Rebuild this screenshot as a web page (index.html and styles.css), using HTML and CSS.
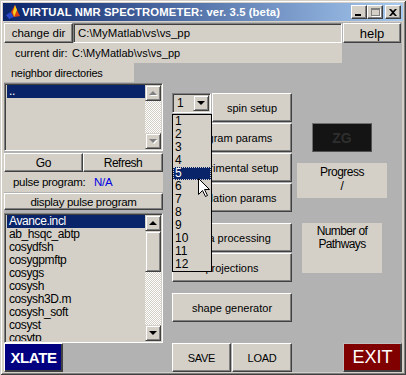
FILE: index.html
```html
<!DOCTYPE html>
<html>
<head>
<meta charset="utf-8">
<link rel="stylesheet" href="styles.css">
</head>
<body>
<div class="window">
  <div class="titlebar">
    <svg class="app-icon" width="16" height="16" viewBox="0 0 16 16">
      <polygon points="1,11 6,8 9,13 4,15" fill="#2a48c8"/>
      <polygon points="6,8 10,1 12,6 15,12 9,13" fill="#e04010"/>
      <polygon points="10,1 12,6 9,13 8,8" fill="#f8d020"/>
    </svg>
    <span class="title">VIRTUAL NMR SPECTROMETER: ver. 3.5 (beta)</span>
    <div class="caption-btns">
      <span class="cbtn cbtn-min"><i class="min-bar"></i></span>
      <span class="cbtn cbtn-max"><i class="max-box"></i></span>
      <span class="cbtn cbtn-close">
        <svg width="8" height="7" viewBox="0 0 8 7"><path d="M0,0 L2,0 L4,2 L6,0 L8,0 L5,3.5 L8,7 L6,7 L4,5 L2,7 L0,7 L3,3.5 Z" fill="#000"/></svg>
      </span>
    </div>
  </div>
  <div class="client">
    <div class="row1">
      <div class="btn btn-change">change dir</div>
      <div class="edit">C:\MyMatlab\vs\vs_pp</div>
      <div class="btn btn-help">help</div>
    </div>
    <div class="curdir"><span class="curdir-lbl">current dir:</span><span>C:\MyMatlab\vs\vs_pp</span></div>
    <div class="body">
      <div class="col-left">
        <div class="neighbor">neighbor directories</div>
        <div class="listbox lb1">
          <div class="items"><div class="item sel">..</div></div>
          <div class="scrollbar">
            <div class="sb-btn"><i class="tri-up dis"></i></div>
            <div class="sb-track"></div>
            <div class="sb-btn"><i class="tri-down dis"></i></div>
          </div>
        </div>
        <div class="btnrow">
          <div class="btn btn-go">Go</div>
          <div class="btn btn-refresh">Refresh</div>
        </div>
        <div class="pulse"><span class="pulse-lbl">pulse program:</span><span class="pulse-val">N/A</span></div>
        <div class="btn btn-display">display pulse program</div>
        <div class="listbox lb2">
          <div class="items">
            <div class="item sel">Avance.incl</div>
            <div class="item">ab_hsqc_abtp</div>
            <div class="item">cosydfsh</div>
            <div class="item">cosygpmftp</div>
            <div class="item">cosygs</div>
            <div class="item">cosysh</div>
            <div class="item">cosysh3D.m</div>
            <div class="item">cosysh_soft</div>
            <div class="item">cosyst</div>
            <div class="item">cosytp</div>
          </div>
          <div class="scrollbar">
            <div class="sb-btn"><i class="tri-up"></i></div>
            <div class="sb-thumb"></div>
            <div class="sb-track"></div>
            <div class="sb-btn"><i class="tri-down"></i></div>
          </div>
        </div>
        <div class="btn btn-xlate">XLATE</div>
      </div>

      <div class="col-mid">
        <div class="spinrow">
          <div class="popup"><span class="popup-val">1</span><span class="popup-btn"><i class="tri-down"></i></span></div>
          <div class="btn btn-spin">spin setup</div>
        </div>
        <div class="btn btn-mid">program params</div>
        <div class="btn btn-mid">experimental setup</div>
        <div class="btn btn-mid">simulation params</div>
        <div class="btn btn-mid btn-gap">data processing</div>
        <div class="btn btn-mid">projections</div>
        <div class="btn btn-mid btn-gap">shape generator</div>
        <div class="saverow">
          <div class="btn btn-save">SAVE</div>
          <div class="btn btn-load">LOAD</div>
        </div>
        <div class="droplist">
          <div class="dl-item">1</div>
          <div class="dl-item">2</div>
          <div class="dl-item">3</div>
          <div class="dl-item">4</div>
          <div class="dl-item dl-sel">5</div>
          <div class="dl-item">6</div>
          <div class="dl-item">7</div>
          <div class="dl-item">8</div>
          <div class="dl-item">9</div>
          <div class="dl-item">10</div>
          <div class="dl-item">11</div>
          <div class="dl-item">12</div>
        </div>
        <svg class="cursor" width="13" height="20" viewBox="0 0 13 20">
          <polygon points="0.5,0.5 0.5,16.5 4.5,12.5 7.5,18.5 9.5,17.5 6.5,11.5 11.5,11.5" fill="#fff" stroke="#000" stroke-width="1"/>
        </svg>
      </div>

      <div class="col-right">
        <div class="zg">ZG</div>
        <div class="progress">Progress<br>/</div>
        <div class="pathways">Number of<br>Pathways</div>
        <div class="btn btn-exit">EXIT</div>
      </div>
    </div>
  </div>
</div>
</body>
</html>
```

FILE: styles.css
```css
html, body {
  margin: 0;
  padding: 0;
}
body {
  width: 406px;
  height: 375px;
  overflow: hidden;
  background: #d4d0c8;
  font-family: "Liberation Sans", Arial, sans-serif;
  color: #000;
}
.window {
  box-sizing: border-box;
  width: 406px;
  height: 375px;
  padding: 3px;
  background: #d4d0c8;
  box-shadow: inset 1px 1px 0 #d4d0c8, inset -1px -1px 0 #404040, inset 2px 2px 0 #fff, inset -2px -2px 0 #808080;
  display: flex;
  flex-direction: column;
}
.titlebar {
  height: 18px;
  flex: none;
  background: linear-gradient(to right, #0a246a, #a6caf0);
  display: flex;
  align-items: center;
  padding: 0 2px;
}
.app-icon { flex: none; }
.title {
  margin-left: 1px;
  color: #fff;
  font-weight: bold;
  font-size: 11.3px;
  letter-spacing: 0.1px;
  white-space: nowrap;
}
.caption-btns {
  margin-left: auto;
  display: flex;
  align-items: center;
}
.cbtn {
  box-sizing: border-box;
  width: 16px;
  height: 14px;
  background: #d4d0c8;
  border: 1px solid;
  border-color: #fff #404040 #404040 #fff;
  box-shadow: inset -1px -1px 0 #808080;
  display: flex;
  align-items: center;
  justify-content: center;
  position: relative;
}
.cbtn-close { margin-left: 2px; }
.min-bar {
  position: absolute;
  left: 3px;
  bottom: 2px;
  width: 6px;
  height: 2px;
  background: #000;
}
.max-box {
  box-sizing: border-box;
  width: 9px;
  height: 8px;
  border: 1px solid #808080;
  border-top-width: 2px;
  box-shadow: 1px 1px 0 #fff;
}
.client {
  margin: 1px 1px 0 1px;
  height: 350px;
  box-sizing: border-box;
  padding-top: 1px;
  background: #b2b2b2;
  display: flex;
  flex-direction: column;
}
.btn {
  box-sizing: border-box;
  background: #d4d0c8;
  border: 1px solid;
  border-color: #fff #404040 #404040 #fff;
  box-shadow: inset -1px -1px 0 #808080;
  display: flex;
  align-items: center;
  justify-content: center;
  font-size: 11px;
  white-space: nowrap;
  overflow: hidden;
}
.row1 {
  display: flex;
  height: 20px;
  flex: none;
}
.btn-change { width: 69px; font-size: 11.5px; }
.edit {
  box-sizing: border-box;
  width: 269px;
  background: #d4d0c8;
  border: 1px solid;
  border-color: #808080 #fff #fff #808080;
  box-shadow: inset 1px 1px 0 #404040;
  font-size: 11.4px;
  padding-left: 4px;
  display: flex;
  align-items: center;
}
.btn-help {
  width: 58px;
  margin-left: 1px;
  font-size: 13px;
}
.curdir {
  width: 338px;
  height: 20px;
  flex: none;
  background: #d4d0c8;
  display: flex;
  align-items: center;
  font-size: 11px;
}
.curdir-lbl {
  width: 57px;
  padding-left: 11px;
}
.body {
  flex: 1;
  display: flex;
  min-height: 0;
}
.col-left {
  width: 159px;
  display: flex;
  flex-direction: column;
}
.neighbor {
  width: 130px;
  height: 19px;
  flex: none;
  background: #d4d0c8;
  font-size: 11px;
  letter-spacing: -0.25px;
  padding-left: 7px;
  box-sizing: border-box;
  display: flex;
  align-items: center;
}
.listbox {
  box-sizing: border-box;
  flex: none;
  background: #d4d0c8;
  border: 1px solid;
  border-color: #808080 #fff #fff #808080;
  box-shadow: inset 1px 1px 0 #404040, inset -1px -1px 0 #d4d0c8;
  padding: 1px;
  display: flex;
  overflow: hidden;
}
.lb1 { height: 68px; margin-top: 1px; }
.lb2 { height: 130px; margin-top: 3px; }
.items {
  flex: 1;
  overflow: hidden;
  padding-left: 1px;
}
.item {
  height: 13px;
  line-height: 13px;
  font-size: 12px;
  letter-spacing: -0.4px;
  padding-left: 2px;
  white-space: nowrap;
}
.item.sel {
  background: #0a246a;
  color: #fff;
}
.scrollbar {
  width: 16px;
  display: flex;
  flex-direction: column;
}
.sb-btn, .sb-thumb {
  box-sizing: border-box;
  height: 16px;
  flex: none;
  background: #d4d0c8;
  border: 1px solid;
  border-color: #d4d0c8 #404040 #404040 #d4d0c8;
  box-shadow: inset 1px 1px 0 #fff, inset -1px -1px 0 #808080;
  display: flex;
  align-items: center;
  justify-content: center;
}
.sb-thumb { height: 41px; }
.sb-track {
  flex: 1;
  background-image: repeating-conic-gradient(#fff 0% 25%, #d4d0c8 0% 50%);
  background-size: 2px 2px;
}
.tri-up, .tri-down {
  width: 0;
  height: 0;
  border-left: 4px solid transparent;
  border-right: 4px solid transparent;
}
.tri-up { border-bottom: 4px solid #000; }
.tri-down { border-top: 4px solid #000; }
.tri-up.dis { border-bottom-color: #808080; filter: drop-shadow(1px 1px 0 #fff); }
.tri-down.dis { border-top-color: #808080; filter: drop-shadow(1px 1px 0 #fff); }
.btnrow {
  display: flex;
  height: 19px;
  flex: none;
  margin-top: 2px;
}
.btn-go { width: 79px; font-size: 12px; letter-spacing: -0.3px; }
.btn-refresh { width: 80px; font-size: 12px; letter-spacing: -0.5px; }
.pulse {
  height: 20px;
  flex: none;
  background: #d4d0c8;
  display: flex;
  align-items: center;
  font-size: 11.5px;
  letter-spacing: -0.3px;
}
.pulse-lbl { width: 81px; padding-left: 9px; }
.pulse-val { color: #0000e0; }
.btn-display {
  height: 17px;
  flex: none;
  margin-top: 1px;
  font-size: 11.5px;
  letter-spacing: -0.3px;
}
.btn-xlate {
  width: 59px;
  height: 29px;
  flex: none;
  background: #000080;
  color: #fff;
  font-weight: bold;
  font-size: 15px;
  letter-spacing: -0.4px;
  border-color: #fff #404040 #404040 #fff;
  box-shadow: inset -1px -1px 0 #404040;
}
.col-mid {
  width: 120px;
  margin-left: 9px;
  padding-top: 30px;
  box-sizing: border-box;
  display: flex;
  flex-direction: column;
  position: relative;
}
.spinrow {
  display: flex;
  height: 29px;
  flex: none;
  gap: 1px;
}
.popup {
  box-sizing: border-box;
  width: 39px;
  height: 20px;
  background: #d4d0c8;
  border: 1px solid;
  border-color: #808080 #fff #fff #808080;
  box-shadow: inset 1px 1px 0 #404040;
  padding: 1px 1px 1px 2px;
  display: flex;
  align-items: center;
  font-size: 12px;
}
.popup-val { flex: 1; padding-left: 2px; }
.popup-btn {
  box-sizing: border-box;
  width: 16px;
  height: 16px;
  background: #d4d0c8;
  border: 1px solid;
  border-color: #d4d0c8 #404040 #404040 #d4d0c8;
  box-shadow: inset 1px 1px 0 #fff, inset -1px -1px 0 #808080;
  display: flex;
  align-items: center;
  justify-content: center;
}
.btn-spin { width: 80px; height: 29px; }
.btn-mid {
  height: 29px;
  flex: none;
  margin-top: 1px;
}
.btn-gap { margin-top: 11px; }
.saverow {
  display: flex;
  gap: 1px;
  height: 29px;
  margin-top: auto;
}
.btn-save { width: 59px; letter-spacing: -0.3px; }
.btn-load { width: 60px; letter-spacing: -0.3px; }
.droplist {
  position: absolute;
  left: 0;
  top: 51px;
  width: 40px;
  box-sizing: border-box;
  border: 1px solid #000;
  background: #d4d0c8;
  z-index: 2;
}
.dl-item {
  height: 13px;
  line-height: 13px;
  font-size: 12px;
  padding-left: 2px;
  box-sizing: border-box;
}
.dl-sel {
  background: #0a246a;
  color: #fff;
  outline: 1px dotted #d4d0c8;
  outline-offset: -1px;
}
.cursor {
  position: absolute;
  left: 26px;
  top: 115px;
  z-index: 3;
}
.col-right {
  flex: 1;
  display: flex;
  flex-direction: column;
}
.zg {
  box-sizing: border-box;
  width: 60px;
  height: 29px;
  margin: 60px 0 0 20px;
  background: #141414;
  border: 1px solid #707070;
  border-right-color: #505050;
  border-bottom-color: #505050;
  color: #2e2e2e;
  font-weight: bold;
  font-size: 14px;
  display: flex;
  align-items: center;
  justify-content: center;
}
.progress {
  width: 90px;
  height: 35px;
  margin: 11px 0 0 5px;
  background: #d4d0c8;
  text-align: center;
  font-size: 12px;
  line-height: 14px;
  letter-spacing: -0.5px;
  padding-top: 2px;
  box-sizing: border-box;
}
.pathways {
  width: 80px;
  height: 50px;
  margin: 25px 0 0 10px;
  background: #d4d0c8;
  text-align: center;
  font-size: 12px;
  line-height: 13px;
  letter-spacing: -0.6px;
  padding-top: 2px;
  box-sizing: border-box;
}
.btn-exit {
  width: 59px;
  height: 29px;
  margin: auto 0 0 51px;
  background: #800000;
  color: #fff;
  font-size: 18px;
  border-color: #c0c0c0 #404040 #404040 #c0c0c0;
  box-shadow: inset -1px -1px 0 #404040;
}
```
